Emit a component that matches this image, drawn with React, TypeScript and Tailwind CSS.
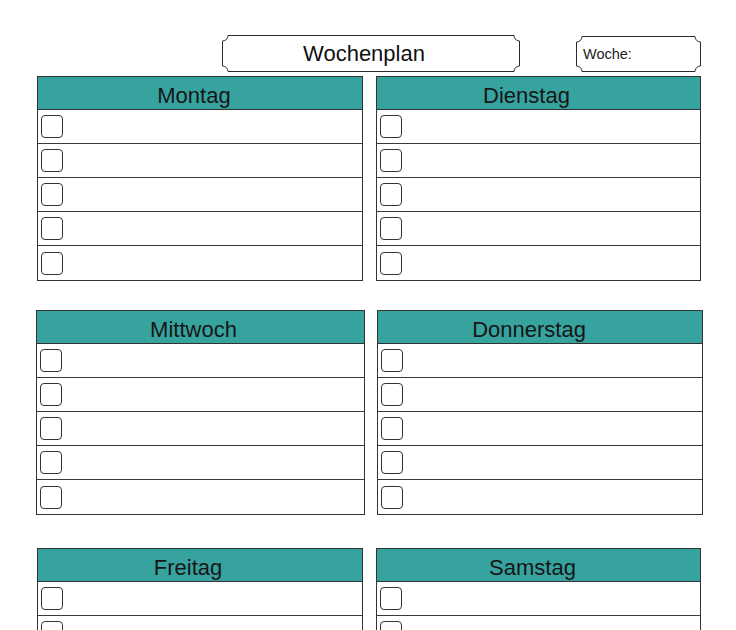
const days = [
  {
    row: "pl-[37px] gap-[13px] mt-[4px]",
    left: { name: "Montag", width: "w-[326px]", pad: "pr-[12px]" },
    right: { name: "Dienstag", width: "w-[325px]", pad: "pr-[24px]" },
  },
  {
    row: "pl-[36px] gap-[12px] mt-[29px]",
    left: { name: "Mittwoch", width: "w-[329px]", pad: "pr-[14px]" },
    right: { name: "Donnerstag", width: "w-[326px]", pad: "pr-[22px]" },
  },
  {
    row: "pl-[37px] gap-[13px] mt-[33px]",
    left: { name: "Freitag", width: "w-[326px]", pad: "pr-[24px]" },
    right: { name: "Samstag", width: "w-[325px]", pad: "pr-[12px]" },
  },
];

// box outline with the small inward-curved corners
function Outline({ w, h }: { w: number; h: number }) {
  const r = 6;
  const d = `M ${r} 0.5 H ${w - r} A ${r} ${r} 0 0 0 ${w - 0.5} ${r} V ${h - r} A ${r} ${r} 0 0 0 ${w - r} ${h - 0.5} H ${r} A ${r} ${r} 0 0 0 0.5 ${h - r} V ${r} A ${r} ${r} 0 0 0 ${r} 0.5 Z`;
  return (
    <svg className="absolute inset-0" width={w} height={h} aria-hidden="true">
      <path d={d} fill="white" stroke="#2b2b2b" strokeWidth="1" />
    </svg>
  );
}

function DayCard({ name, width, pad }: { name: string; width: string; pad: string }) {
  return (
    <div className={`${width} border border-[#333] bg-white`}>
      <div
        className={`flex h-[33px] items-center justify-center border-b border-[#333] bg-[#36a39f] pt-[4px] text-[22px] text-[#161616] ${pad}`}
      >
        {name}
      </div>
      {[0, 1, 2, 3, 4].map((i) => (
        <div key={i} className={`flex h-[34px] items-center ${i < 4 ? "border-b border-[#3a3a3a]" : ""}`}>
          <div className="ml-[3px] h-[23px] w-[22px] rounded-[4px] border border-[#333]" />
        </div>
      ))}
    </div>
  );
}

export default function App() {
  return (
    <div className="h-[630px] w-[736px] overflow-hidden bg-white font-['Liberation_Sans',Arial,sans-serif]">
      <div className="flex items-start pt-[35px]">
        <div className="relative ml-[222px] h-[37px] w-[298px]">
          <Outline w={298} h={37} />
          <div className="relative flex h-full items-center justify-center pr-[14px] text-[22px] text-[#111]">
            Wochenplan
          </div>
        </div>
        <div className="relative ml-[56px] mt-[1px] h-[36px] w-[125px]">
          <Outline w={125} h={36} />
          <div className="relative flex h-full items-center pl-[7px] pt-[1px] text-[14.5px] text-[#222]">Woche:</div>
        </div>
      </div>
      {days.map((d) => (
        <div key={d.left.name} className={`flex ${d.row}`}>
          <DayCard {...d.left} />
          <DayCard {...d.right} />
        </div>
      ))}
    </div>
  );
}
